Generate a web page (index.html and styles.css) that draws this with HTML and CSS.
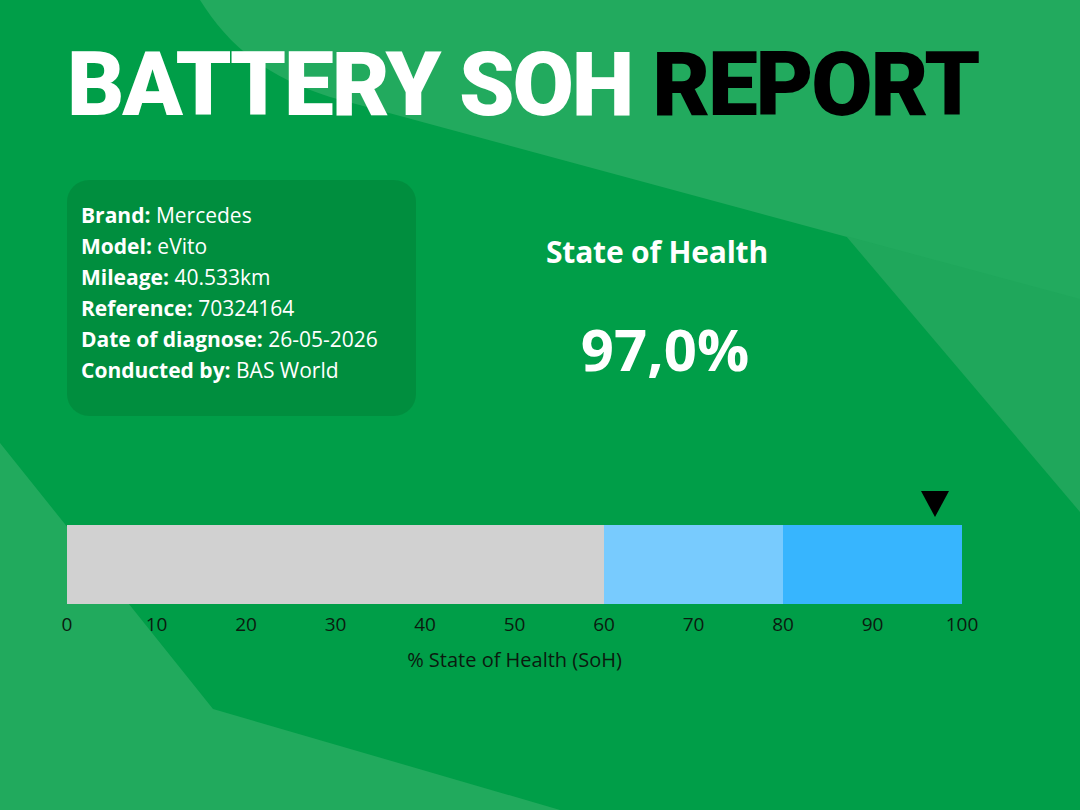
FILE: index.html
```html
<!DOCTYPE html>
<html lang="en">
<head>
<meta charset="utf-8">
<title>Battery SOH Report</title>
<link rel="stylesheet" href="styles.css">
</head>
<body>
<div class="page">
  <svg class="backdrop" width="1080" height="810" viewBox="0 0 1080 810" aria-hidden="true">
    <path d="M200 0 C 225 40, 260 75, 330 97 L 1080 300 L 1080 0 Z" fill="#22aa5e"/>
    <path d="M846 236 L 1080 299 L 1080 512 Z" fill="#1fa75b"/>
    <path d="M0 443 L 213 709 L 560 810 L 0 810 Z" fill="#21aa5d"/>
  </svg>

  <h1 class="title"><span class="t-white">BATTERY SOH</span> <span class="t-black">REPORT</span></h1>

  <div class="row">
    <div class="card">
      <p><b>Brand:</b> Mercedes</p>
      <p><b>Model:</b> eVito</p>
      <p><b>Mileage:</b> 40.533km</p>
      <p><b>Reference:</b> 70324164</p>
      <p><b>Date of diagnose:</b> 26-05-2026</p>
      <p><b>Conducted by:</b> BAS World</p>
    </div>
    <div class="soh">
      <div class="soh-label">State of Health</div>
      <div class="soh-value">97,0%</div>
    </div>
  </div>

  <div class="chart">
    <div class="marker-lane">
      <span class="marker" style="left:97%"></span>
    </div>
    <div class="bar">
      <div class="seg seg-gray" style="width:60%"></div>
      <div class="seg seg-light" style="width:20%"></div>
      <div class="seg seg-blue" style="width:20%"></div>
    </div>
    <div class="ticks">
      <span class="tick">0</span>
      <span class="tick">10</span>
      <span class="tick">20</span>
      <span class="tick">30</span>
      <span class="tick">40</span>
      <span class="tick">50</span>
      <span class="tick">60</span>
      <span class="tick">70</span>
      <span class="tick">80</span>
      <span class="tick">90</span>
      <span class="tick">100</span>
    </div>
    <div class="axis-title">% State of Health (SoH)</div>
  </div>
</div>
</body>
</html>
```

FILE: styles.css
```css
* { box-sizing: border-box; }
html, body { margin: 0; padding: 0; }
body {
  width: 1080px;
  height: 810px;
  overflow: hidden;
  background: #009e48;
  font-family: "Open Sans", "Noto Sans", "Liberation Sans", sans-serif;
}
.page {
  position: relative;
  width: 1080px;
  height: 810px;
  padding: 35px 0 0 67px;
  display: flex;
  flex-direction: column;
}
.backdrop {
  position: absolute;
  left: 0;
  top: 0;
  z-index: 0;
}
.title, .row, .chart { position: relative; z-index: 1; }

.title {
  margin: 0;
  font-family: Roboto, "Liberation Sans", sans-serif;
  font-weight: 900;
  font-size: 89px;
  line-height: 100px;
  letter-spacing: -2.2px;
  white-space: nowrap;
}
.t-white { color: #ffffff; }
.t-black { color: #000000; }

.row {
  display: flex;
  margin-top: 45px;
}
.card {
  width: 349px;
  height: 236px;
  border-radius: 22px;
  background: rgba(0, 110, 45, 0.32);
  padding: 20px 14px;
  color: #ffffff;
}
.card p {
  margin: 0;
  font-size: 21px;
  line-height: 31px;
  font-weight: 400;
  white-space: nowrap;
}
.card b { font-weight: 700; }

.soh {
  width: 482px;
  display: flex;
  flex-direction: column;
  align-items: center;
  color: #ffffff;
  padding-top: 51px;
}
.soh-label {
  font-size: 30px;
  font-weight: 700;
  line-height: 42px;
  letter-spacing: -0.2px;
}
.soh-value {
  margin-top: 41px;
  font-size: 58px;
  font-weight: 700;
  line-height: 70px;
  padding-left: 16px;
}

.chart {
  width: 895px;
  margin-top: 73px;
}
.marker-lane {
  position: relative;
  height: 36px;
}
.marker {
  position: absolute;
  top: 2px;
  width: 0;
  height: 0;
  border-left: 14px solid transparent;
  border-right: 14px solid transparent;
  border-top: 26px solid #000000;
  transform: translateX(-14px);
}
.bar {
  display: flex;
  height: 79px;
}
.seg { height: 100%; }
.seg-gray { background: #d1d1d1; }
.seg-light { background: #78cbfe; }
.seg-blue { background: #37b5fe; }

.ticks {
  display: flex;
  justify-content: space-between;
  margin-top: 6px;
  height: 28px;
}
.tick {
  width: 0;
  display: flex;
  justify-content: center;
  white-space: nowrap;
  font-size: 19px;
  line-height: 28px;
  font-weight: 400;
  color: #0b1a0f;
}
.axis-title {
  margin-top: 9px;
  text-align: center;
  font-size: 20px;
  line-height: 26px;
  font-weight: 400;
  color: #0b1a0f;
}
```
